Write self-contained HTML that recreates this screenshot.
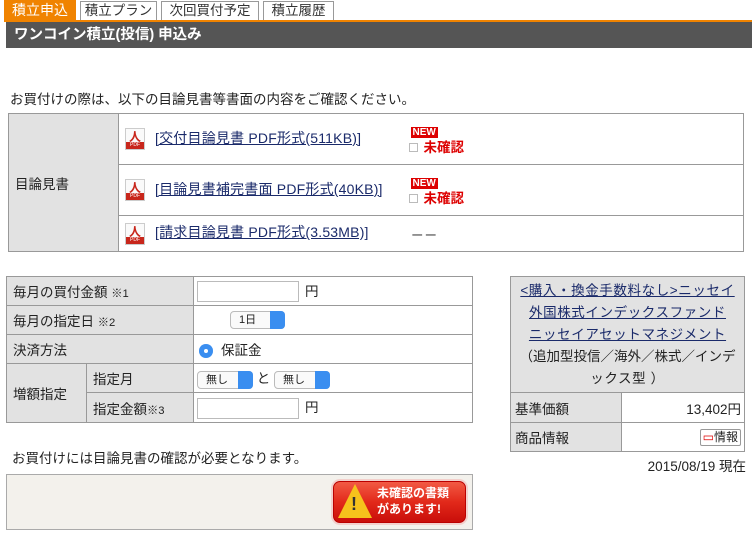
<!DOCTYPE html>
<html><head><meta charset="utf-8"><style>
*{box-sizing:border-box}
body{margin:0;width:752px;height:535px;background:#fff;font-family:"Liberation Sans","Noto Sans CJK JP",sans-serif;font-size:13.5px;color:#222;position:relative;overflow:hidden}
.a{position:absolute}
.tab{position:absolute;top:1px;height:19px;border:1px solid #999;border-bottom:none;background:#fff;font-size:13.5px;line-height:17px;text-align:center;color:#333}
table{border-collapse:collapse;position:absolute;table-layout:fixed}
td{border:1px solid #999;padding:0 6px}
.g{background:#e2e2e2}
a{color:#1a2a6a;text-decoration:underline}
.t1 a{font-size:14px;letter-spacing:0.2px}
.pdf{display:inline-block;width:20px;height:22px;vertical-align:middle;margin-right:10px;position:relative;border:1px solid #ccc;background:#fafafa}
.pdf:after{content:"PDF";position:absolute;left:0;right:0;bottom:0;height:7px;background:#c8261b;color:#fff;font-size:5px;line-height:7px;text-align:center}
.pdf:before{content:"人";position:absolute;left:3px;top:-1px;color:#c8261b;font-size:12px;font-weight:bold}
.new{display:inline-block;background:#d00;color:#fff;font-weight:bold;font-size:10px;line-height:11px;padding:0 2px;margin-left:2px}
.mk{color:#d00;font-weight:bold}
.cb{display:inline-block;width:9px;height:9px;border:1px solid #bbb;margin-right:6px}
.inp{display:inline-block;width:102px;height:21px;border:1px solid #bbb;vertical-align:middle;margin-right:6px}
.sel{display:inline-block;height:18px;border:1px solid #bbb;border-radius:4px;font-size:11px;line-height:16px;padding-left:8px;position:relative;vertical-align:middle;background:#fafafa}
.sel:after{content:"";position:absolute;right:-1px;top:-1px;width:15px;height:18px;background:#3a8ef0;border-radius:0 4px 4px 0}
</style></head><body>
<div class="a" style="left:4px;top:0;width:72px;height:21px;background:#f08300;color:#fff;font-size:14px;line-height:21px;text-align:center">積立申込</div>
<div class="tab" style="left:80px;width:77px">積立プラン</div>
<div class="tab" style="left:161px;width:98px">次回買付予定</div>
<div class="tab" style="left:263px;width:71px">積立履歴</div>
<div class="a" style="left:4px;top:20px;width:748px;height:2px;background:#f08300"></div>
<div class="a" style="left:6px;top:22px;width:746px;height:26px;background:#555;color:#fff;font-weight:bold;font-size:14.5px;line-height:26px;padding-left:8px">ワンコイン積立(投信) 申込み</div>
<div class="a" style="left:10px;top:88px">お買付けの際は、以下の目論見書等書面の内容をご確認ください。</div>
<table class="t1" style="left:8px;top:113px;width:736px">
<colgroup><col style="width:110px"><col style="width:290px"><col></colgroup>
<tr style="height:51px"><td class="g" rowspan="3">目論見書</td><td style="border-right:none"><span class="pdf"></span><a>[交付目論見書 PDF形式(511KB)]</a></td><td style="border-left:none;line-height:17px;padding-left:0"><span class="new">NEW</span><br><span class="cb"></span><span class="mk">未確認</span></td></tr>
<tr style="height:51px"><td style="border-right:none"><span class="pdf"></span><a>[目論見書補完書面 PDF形式(40KB)]</a></td><td style="border-left:none;line-height:17px;padding-left:0"><span class="new">NEW</span><br><span class="cb"></span><span class="mk">未確認</span></td></tr>
<tr style="height:36px"><td style="border-right:none"><span class="pdf"></span><a>[請求目論見書 PDF形式(3.53MB)]</a></td><td style="border-left:none;padding-left:2px">－－</td></tr>
</table>
<table style="left:6px;top:276px;width:467px">
<colgroup><col style="width:80px"><col style="width:107px"><col></colgroup>
<tr style="height:29px"><td class="g" colspan="2">毎月の買付金額 <small>※1</small></td><td style="padding-left:3px"><span class="inp"></span>円</td></tr>
<tr style="height:29px"><td class="g" colspan="2">毎月の指定日 <small>※2</small></td><td style="padding-left:36px"><span class="sel" style="width:55px">1日</span></td></tr>
<tr style="height:29px"><td class="g" colspan="2">決済方法</td><td style="padding-left:5px"><span style="display:inline-block;width:14px;height:14px;border-radius:50%;background:#3a8ef0;vertical-align:middle;margin-right:8px;box-shadow:inset 0 0 0 5px #3a8ef0,inset 0 0 0 7px #fff"></span>保証金</td></tr>
<tr style="height:29px"><td class="g" rowspan="2">増額指定</td><td class="g">指定月</td><td style="padding-left:3px"><span class="sel" style="width:56px">無し</span> と <span class="sel" style="width:56px">無し</span></td></tr>
<tr style="height:30px"><td class="g">指定金額<small>※3</small></td><td style="padding-left:3px"><span class="inp"></span>円</td></tr>
</table>
<table style="left:510px;top:276px;width:235px">
<colgroup><col style="width:111px"><col></colgroup>
<tr style="height:116px"><td class="g" colspan="2" style="text-align:center;line-height:22px;padding:0 2px;letter-spacing:0.6px">
<a>&lt;購入・換金手数料なし&gt;ニッセイ<br>外国株式インデックスファンド</a><br><a>ニッセイアセットマネジメント</a><br><span style="white-space:nowrap;letter-spacing:0">（追加型投信／海外／株式／インデ</span><br>ックス型 ）</td></tr>
<tr style="height:30px"><td class="g" style="padding-left:4px">基準価額</td><td style="text-align:right;padding-right:3px">13,402円</td></tr>
<tr style="height:29px"><td class="g" style="padding-left:4px">商品情報</td><td style="text-align:right;padding-right:3px"><span style="display:inline-block;border:1px solid #999;border-radius:2px;font-size:12px;line-height:15px;padding:0 2px"><span style="color:#d00">▭</span>情報</span></td></tr>
</table>
<div class="a" style="right:6px;top:455px">2015/08/19 現在</div>
<div class="a" style="left:12px;top:447px">お買付けには目論見書の確認が必要となります。</div>
<div class="a" style="left:6px;top:474px;width:467px;height:56px;background:#f3f1ec;border:1px solid #aaa"></div>
<div class="a" style="left:333px;top:481px;width:133px;height:42px;border-radius:7px;border:1px solid #b00;background:linear-gradient(#f25a44,#e2291a 50%,#c90e0a);box-shadow:0 0 0 2px #f3d0cc"></div>
<div class="a" style="left:338px;top:484px;width:0;height:0;border-left:17px solid transparent;border-right:17px solid transparent;border-bottom:34px solid #f6c21c"></div>
<div class="a" style="left:351px;top:494px;color:#333;font-weight:bold;font-size:18px">!</div>
<div class="a" style="left:377px;top:485px;color:#fff;font-weight:bold;font-size:12px;line-height:16px">未確認の書類<br>があります!</div>
</body></html>
